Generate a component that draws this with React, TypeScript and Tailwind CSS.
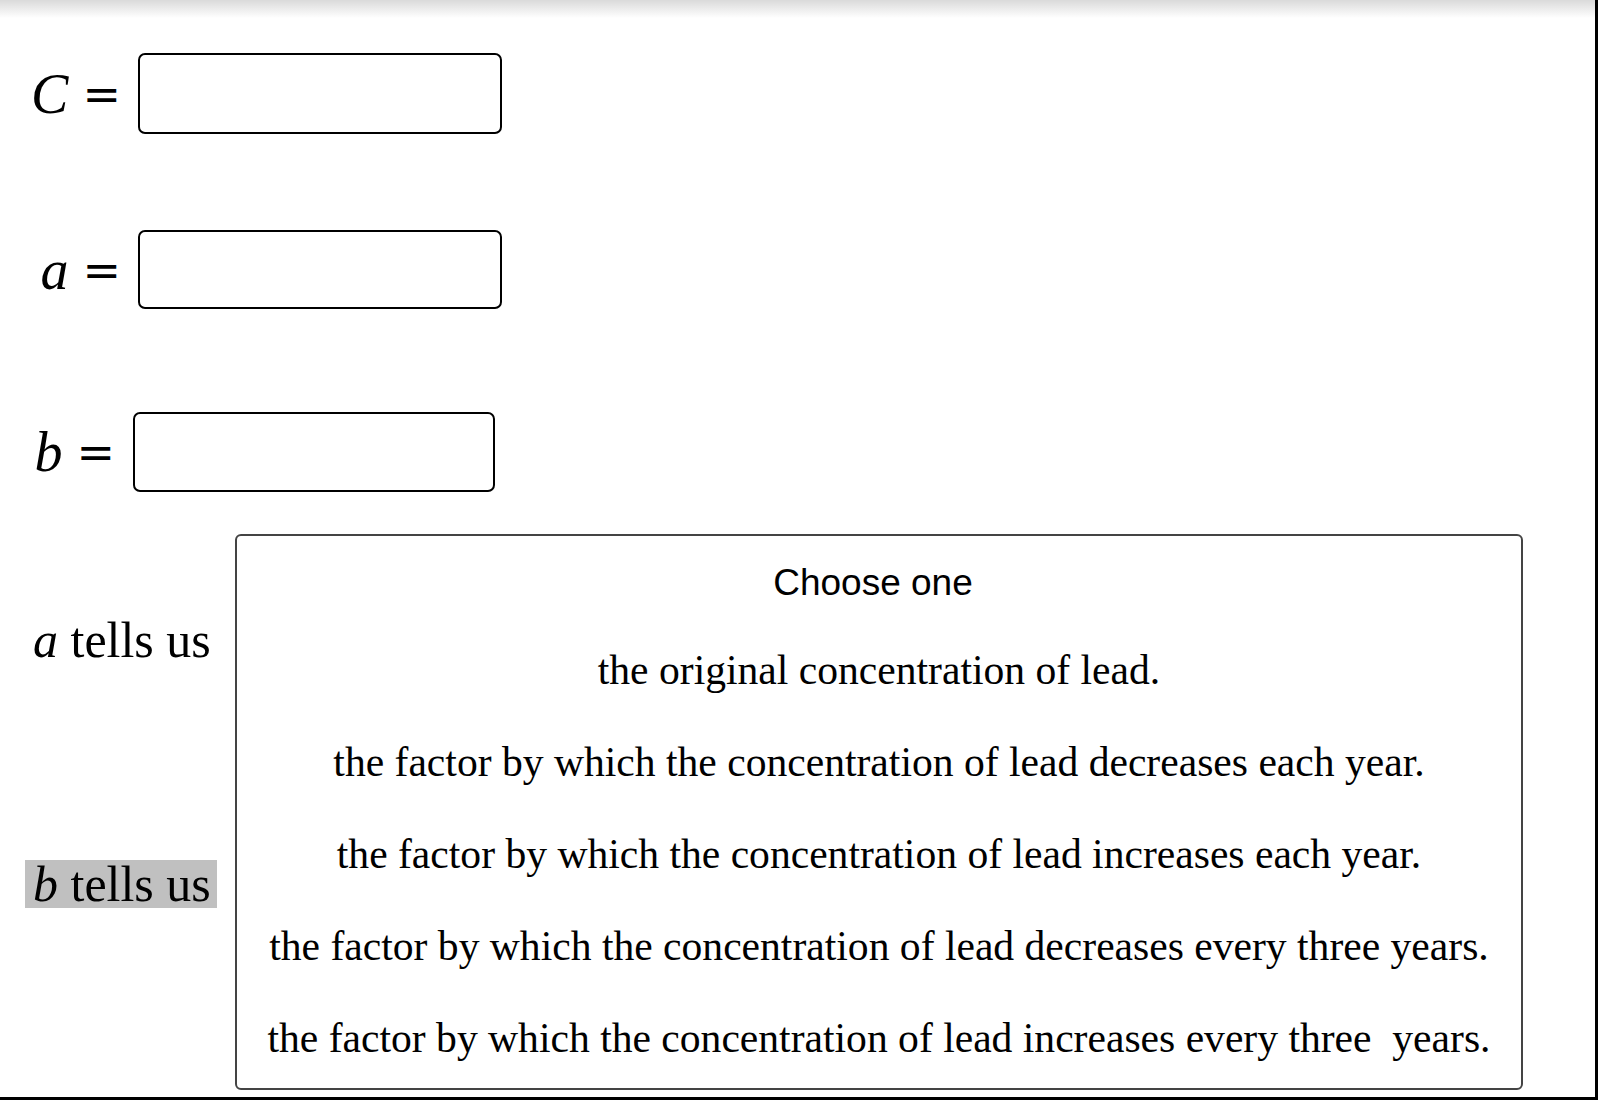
import React from "react";

const serif = { fontFamily: '"Liberation Serif", "Times New Roman", serif' };
const eq = { fontFamily: '"DejaVu Serif", "Liberation Serif", serif' };

export default function App() {
  const choices = [
    "the original concentration of lead.",
    "the factor by which the concentration of lead decreases each year.",
    "the factor by which the concentration of lead increases each year.",
    "the factor by which the concentration of lead decreases every three years.",
    "the factor by which the concentration of lead increases every three  years.",
  ];
  return (
    <div className="w-[1598px] h-[1100px] border-r-[3px] border-b-[3px] border-black bg-white overflow-hidden">
      <div className="h-[18px] bg-gradient-to-b from-[#dadada] to-white" />
      <div className="flex items-center mt-[35px]">
        <div className="w-[121px] flex justify-end items-center text-[56px] leading-none text-black" style={serif}>
          <span className="italic">C</span>
          <span className="ml-[14px] text-[46px] font-extralight" style={eq}>=</span>
        </div>
        <div className="w-[364px] h-[81px] ml-[17px] border-2 border-black rounded-[7px]" />
      </div>
      <div className="flex items-center mt-[96px]">
        <div className="w-[121px] flex justify-end items-center text-[56px] leading-none text-black" style={serif}>
          <span className="italic">a</span>
          <span className="ml-[14px] text-[46px]" style={eq}>=</span>
        </div>
        <div className="w-[364px] h-[79px] ml-[17px] border-2 border-black rounded-[7px]" />
      </div>
      <div className="flex items-center mt-[103px]">
        <div className="w-[115px] flex justify-end items-center text-[56px] leading-none text-black" style={serif}>
          <span className="italic">b</span>
          <span className="ml-[14px] text-[46px]" style={eq}>=</span>
        </div>
        <div className="w-[362px] h-[80px] ml-[18px] border-2 border-black rounded-[7px]" />
      </div>
      <div className="flex mt-[42px] pl-[25px]">
        <div className="w-[192px] flex flex-col items-start text-[50px] leading-[48px] text-black" style={serif}>
          <div className="mt-[82px] px-[8px] whitespace-nowrap">
            <span className="italic">a</span> tells us
          </div>
          <div className="mt-[196px] pl-[8px] pr-[6px] bg-[#c0c0c0] whitespace-nowrap">
            <span className="italic">b</span> tells us
          </div>
        </div>
        <div className="w-[1288px] h-[556px] ml-[18px] border-2 border-[#444444] rounded-[6px] flex flex-col items-center">
          <div
            className="mt-[23px] mr-[12px] h-[48px] leading-[48px] text-[37px] text-black"
            style={{ fontFamily: '"Liberation Sans", Arial, sans-serif' }}
          >
            Choose one
          </div>
          <div className="mt-[17px] flex flex-col items-center">
            {choices.map((c) => (
              <div
                key={c}
                className="h-[92px] leading-[92px] text-[41.6px] text-black whitespace-pre"
                style={serif}
              >
                {c}
              </div>
            ))}
          </div>
        </div>
      </div>
    </div>
  );
}
